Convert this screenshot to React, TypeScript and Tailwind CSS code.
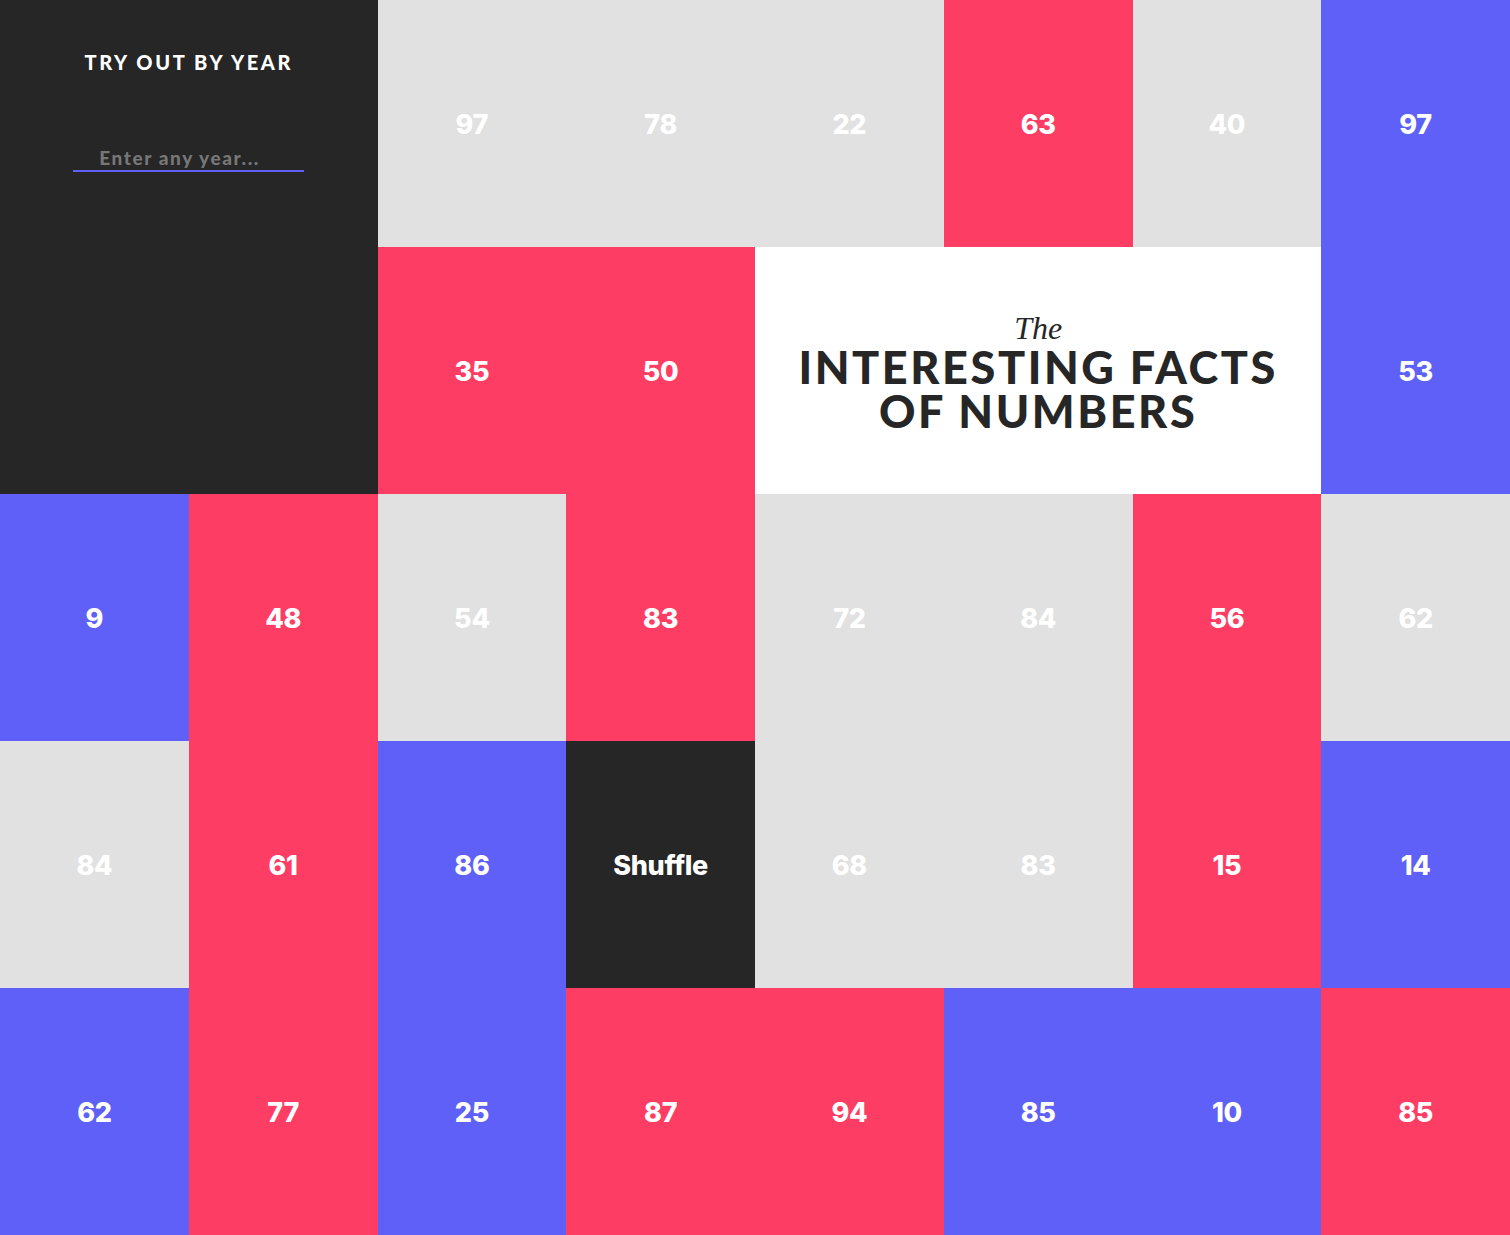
import React, { useState } from 'react';

type Tile = { n: string; c: 'gray' | 'red' | 'blue' | 'dark' };

const tileColor: Record<Tile['c'], string> = {
  gray: 'bg-[#e1e1e1]',
  red: 'bg-[#fd3d63]',
  blue: 'bg-[#5e60f7]',
  dark: 'bg-[#262626]',
};

const row0: Tile[] = [
  { n: '97', c: 'gray' },
  { n: '78', c: 'gray' },
  { n: '22', c: 'gray' },
  { n: '63', c: 'red' },
  { n: '40', c: 'gray' },
  { n: '97', c: 'blue' },
];
const row1a: Tile[] = [
  { n: '35', c: 'red' },
  { n: '50', c: 'red' },
];
const row1b: Tile[] = [{ n: '53', c: 'blue' }];
const rest: Tile[] = [
  { n: '9', c: 'blue' },
  { n: '48', c: 'red' },
  { n: '54', c: 'gray' },
  { n: '83', c: 'red' },
  { n: '72', c: 'gray' },
  { n: '84', c: 'gray' },
  { n: '56', c: 'red' },
  { n: '62', c: 'gray' },
  { n: '84', c: 'gray' },
  { n: '61', c: 'red' },
  { n: '86', c: 'blue' },
  { n: 'Shuffle', c: 'dark' },
  { n: '68', c: 'gray' },
  { n: '83', c: 'gray' },
  { n: '15', c: 'red' },
  { n: '14', c: 'blue' },
  { n: '62', c: 'blue' },
  { n: '77', c: 'red' },
  { n: '25', c: 'blue' },
  { n: '87', c: 'red' },
  { n: '94', c: 'red' },
  { n: '85', c: 'blue' },
  { n: '10', c: 'blue' },
  { n: '85', c: 'red' },
];

const NumberTile: React.FC<{ tile: Tile }> = ({ tile }) => (
  <div
    className={`flex items-center justify-center pt-[4px] text-white font-['Inter',sans-serif] font-extrabold text-[27px] tracking-[-0.3px] ${tileColor[tile.c]} ${
      tile.c === 'dark' ? 'cursor-pointer' : ''
    }`}
  >
    {tile.n}
  </div>
);

export default function App() {
  const [year, setYear] = useState('');

  return (
    <div className="w-[1510px] h-[1235px] grid grid-cols-8 grid-rows-[repeat(5,247px)] font-['Lato',sans-serif] overflow-hidden">
      {/* panneau de recherche */}
      <div className="col-span-2 row-span-2 bg-[#262626] flex flex-col items-center pt-[47px]">
        <h2 className="text-white font-black text-[20px] tracking-[2.6px]">TRY OUT BY YEAR</h2>
        <input
          value={year}
          onChange={(e) => setYear(e.target.value)}
          placeholder="Enter any year..."
          className="mt-[70px] w-[231px] bg-transparent border-b-2 border-[#5e60f7] pl-[26px] pb-[1px] text-[19px] leading-[22px] font-black tracking-[1.6px] text-white placeholder:text-[#777777] outline-none"
        />
      </div>

      {row0.map((t, i) => (
        <NumberTile key={'r0' + i} tile={t} />
      ))}
      {row1a.map((t, i) => (
        <NumberTile key={'r1a' + i} tile={t} />
      ))}

      <div className="col-span-3 bg-white flex flex-col items-center justify-center pt-[2px]">
        <span className="font-['Liberation_Serif',serif] italic text-[32px] leading-[34px] text-[#262626]">The</span>
        <h1 className="text-[#262626] font-black text-[45px] leading-[44px] tracking-[2.6px] text-center">
          INTERESTING FACTS
          <br />
          OF NUMBERS
        </h1>
      </div>

      {row1b.map((t, i) => (
        <NumberTile key={'r1b' + i} tile={t} />
      ))}
      {rest.map((t, i) => (
        <NumberTile key={'rest' + i} tile={t} />
      ))}
    </div>
  );
}
